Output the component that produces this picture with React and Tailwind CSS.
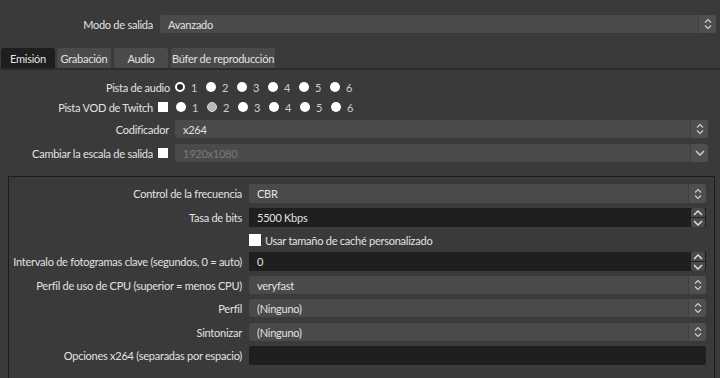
const font = { fontFamily: 'Lato, "Noto Sans", sans-serif' };

const UpDown = () => (
  <svg width="8" height="12" viewBox="0 0 8 12" fill="none" stroke="#cfcfcf" strokeWidth="1.2">
    <path d="M1 4.5 L4 1.5 L7 4.5" />
    <path d="M1 7.5 L4 10.5 L7 7.5" />
  </svg>
);

const Down = () => (
  <svg width="10" height="6" viewBox="0 0 10 6" fill="none" stroke="#cfcfcf" strokeWidth="1.5">
    <path d="M1 1 L5 5 L9 1" />
  </svg>
);

const SpinArrows = () => (
  <div className="flex flex-col w-[14px] gap-[1px]">
    <div className="h-[9px] bg-[#4a4a4a] rounded-t-[2px] flex items-center justify-center">
      <svg width="10" height="6" viewBox="0 0 10 6" fill="none" stroke="#e6e6e6" strokeWidth="1.4">
        <path d="M1 5 L5 1 L9 5" />
      </svg>
    </div>
    <div className="h-[9px] bg-[#4a4a4a] rounded-b-[2px] flex items-center justify-center">
      <svg width="10" height="6" viewBox="0 0 10 6" fill="none" stroke="#e6e6e6" strokeWidth="1.4">
        <path d="M1 1 L5 5 L9 1" />
      </svg>
    </div>
  </div>
);

const Combo = ({ value, disabled, h = "h-[18px]" }) => (
  <div className={`flex-1 flex ${h} rounded-[3px] bg-[#4a4a4a]`}>
    <div className={`flex-1 flex items-center pl-[8px] ${disabled ? "text-[#7a7a7a]" : ""}`}>{value}</div>
    <div className="w-[18px] border-l border-[#3e3e3e] bg-[#4f4f4f] rounded-r-[3px] flex items-center justify-center">
      {disabled ? <Down /> : <UpDown />}
    </div>
  </div>
);

const Spin = ({ value }) => (
  <div className="flex-1 flex h-[19px] bg-[#1f1f1f] items-center pr-[1px]">
    <div className="flex-1 pl-[8px]">{value}</div>
    <SpinArrows />
  </div>
);

const Radio = ({ n, state }) => {
  let cls = "bg-white";
  if (state === "ring") cls = "bg-[#2a2a2a] border-[2px] border-white";
  if (state === "gray") cls = "bg-[#b8b8b8] border border-[#d8d8d8]";
  return (
    <div className="flex items-center w-[31px]">
      <div className={`w-[10px] h-[10px] rounded-full ${cls}`} />
      <span className="ml-[6px] text-[#cfcfcf]">{n}</span>
    </div>
  );
};

const Check = () => <div className="w-[10px] h-[10px] bg-white" />;

const GroupRow = ({ label, children, className = "" }) => (
  <div className={`flex items-center ${className}`}>
    <div className="w-[240px] text-right pr-[7px] whitespace-nowrap">{label}</div>
    <div className="flex-1 flex">{children}</div>
  </div>
);

export default function App() {
  return (
    <div style={font} className="w-[720px] h-[378px] overflow-hidden bg-[#3a3a3a] text-[#e2e2e2] text-[11px] tracking-[-0.25px] leading-none">
      <div className="flex items-center pt-[15px] pr-[4px]">
        <div className="w-[160px] text-right pr-[7px]">Modo de salida</div>
        <Combo value="Avanzado" />
      </div>

      <div className="flex gap-[2px] pl-[1px] mt-[15px] whitespace-nowrap">
        <div className="w-[54px] h-[20px] bg-[#1e1e1e] rounded-t-[3px] flex items-center justify-center">Emisión</div>
        <div className="w-[54px] h-[20px] bg-[#4a4a4a] rounded-t-[3px] flex items-center justify-center">Grabación</div>
        <div className="w-[54px] h-[20px] bg-[#4a4a4a] rounded-t-[3px] flex items-center justify-center ml-[1px]">Audio</div>
        <div className="w-[104px] h-[20px] bg-[#4a4a4a] rounded-t-[3px] flex items-center justify-center ml-[1px]">Búfer de reproducción</div>
      </div>
      <div className="h-[2px] bg-[#2c2c2c]" />

      <div className="pr-[12px]">
        <div className="flex items-center mt-[10px] h-[14px]">
          <div className="w-[175px] text-right pr-[5px]">Pista de audio</div>
          <Radio n="1" state="ring" />
          <Radio n="2" />
          <Radio n="3" />
          <Radio n="4" />
          <Radio n="5" />
          <Radio n="6" />
        </div>
        <div className="flex items-center mt-[6px] h-[14px]">
          <div className="w-[176px] flex items-center justify-end pr-[8px]">
            <span className="mr-[5px]">Pista VOD de Twitch</span>
            <Check />
          </div>
          <Radio n="1" />
          <Radio n="2" state="gray" />
          <Radio n="3" />
          <Radio n="4" />
          <Radio n="5" />
          <Radio n="6" />
        </div>
        <div className="flex items-center mt-[6px]">
          <div className="w-[175px] text-right pr-[6px]">Codificador</div>
          <Combo value="x264" />
        </div>
        <div className="flex items-center mt-[6px]">
          <div className="w-[175px] flex items-center justify-end pr-[7px]">
            <span className="mr-[5px]">Cambiar la escala de salida</span>
            <Check />
          </div>
          <Combo value="1920x1080" disabled />
        </div>
      </div>

      <div className="mt-[14px] ml-[8px] mr-[5px] border border-[#1c1c1c] pt-[7px] pr-[8px] h-[240px]">
        <GroupRow label="Control de la frecuencia">
          <Combo value="CBR" h="h-[19px]" />
        </GroupRow>
        <GroupRow label="Tasa de bits" className="mt-[5px]">
          <Spin value="5500 Kbps" />
        </GroupRow>
        <GroupRow label="" className="mt-[5px] h-[16px]">
          <div className="flex items-center">
            <div className="w-[12px] h-[12px] bg-white mr-[4px]" />
            <span>Usar tamaño de caché personalizado</span>
          </div>
        </GroupRow>
        <GroupRow label="Intervalo de fotogramas clave (segundos, 0 = auto)" className="mt-[4px]">
          <Spin value="0" />
        </GroupRow>
        <GroupRow label="Perfil de uso de CPU (superior = menos CPU)" className="mt-[5px]">
          <Combo value="veryfast" />
        </GroupRow>
        <GroupRow label="Perfil" className="mt-[5px]">
          <Combo value="(Ninguno)" />
        </GroupRow>
        <GroupRow label="Sintonizar" className="mt-[6px]">
          <Combo value="(Ninguno)" />
        </GroupRow>
        <GroupRow label="Opciones x264 (separadas por espacio)" className="mt-[5px]">
          <div className="flex-1 h-[19px] bg-[#1f1f1f] rounded-[2px]" />
        </GroupRow>
      </div>
    </div>
  );
}
